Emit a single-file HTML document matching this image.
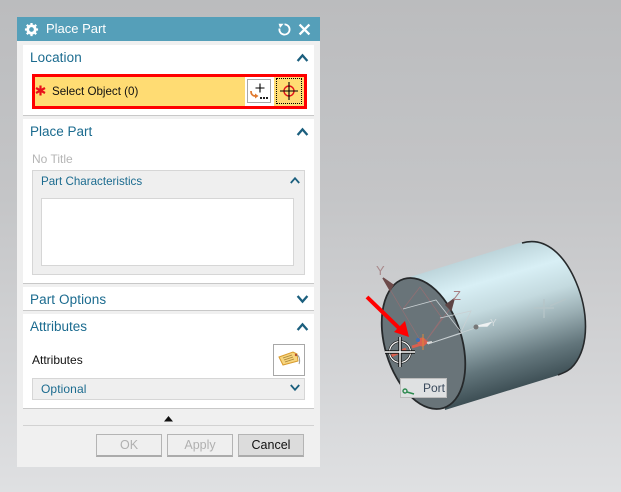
<!DOCTYPE html>
<html>
<head>
<meta charset="utf-8">
<style>
html,body{margin:0;padding:0;}
body{width:621px;height:492px;position:relative;overflow:hidden;background:linear-gradient(180deg,#bbbcbe 0%,#c4c5c7 40%,#d3d4d6 75%,#dfe0e2 100%);font-family:"Liberation Sans",sans-serif;}
.a{position:absolute;box-sizing:border-box;}
.t{position:absolute;white-space:nowrap;line-height:16px;}
.h{font-size:13.5px;color:#1b6b8f;}
.sec{background:#fff;left:23px;width:291px;border-bottom:1px solid #c8c8c8;}
.btn{border:1px solid #b4b4b4;border-bottom:2px solid #ababab;background:#efefef;text-align:center;font-size:12.5px;line-height:21px;color:#b0b0b0;}
svg{position:absolute;overflow:visible;}
</style>
</head>
<body>
<!-- 3D model -->
<svg style="left:0;top:0" width="621" height="492" viewBox="0 0 621 492">
<defs>
<linearGradient id="cy" gradientUnits="userSpaceOnUse" x1="462" y1="254" x2="504" y2="398">
<stop offset="0" stop-color="#b6ced4"/>
<stop offset=".22" stop-color="#d8eff5"/>
<stop offset=".4" stop-color="#c4dadf"/>
<stop offset=".58" stop-color="#9aaeb3"/>
<stop offset=".78" stop-color="#63767c"/>
<stop offset="1" stop-color="#36474d"/>
</linearGradient>
</defs>
<path d="M410 277 L526 241 C546 238 565 256 576 282 C588 310 590 345 574 365 C570 370 566 372 562 374 L445 410 L437 350 Z" fill="url(#cy)"/>
<path d="M522 243 C546 236 565 256 576 282 C588 310 590 345 574 365 C570 370 566 372 558 375" fill="none" stroke="#26292b" stroke-width="1.6"/>
<ellipse cx="423.5" cy="343.5" rx="38.5" ry="67.5" transform="rotate(-17 423.5 343.5)" fill="#697479" stroke="#26292b" stroke-width="1.8"/>
<!-- datum -->
<g fill="none" stroke="#9c6e72" stroke-width=".7" opacity=".85">
<path d="M385 281 L423 345"/><path d="M423 345 L452 306"/>
<path d="M403 309 L420 287 L442 318 L423 345"/>
</g>
<g fill="none" stroke="#c9d0d3" stroke-width=".8">
<path d="M403 309 L436 300 L462 333 L428 344"/>
<path d="M440 318 L471 311 L461 332"/>
<path d="M428 344 L490 323"/>
</g>
<path d="M383 278 L393 285 L390 290 Z" fill="#6d4a4a" stroke="#6d4a4a" stroke-width="1.5"/>
<path d="M454 299 L451 310 L446 305 Z" fill="#5d4545" stroke="#5d4545" stroke-width="1.5"/>
<path d="M478 326 L490 323 L487 326 Z" fill="#eef1f2" stroke="#eef1f2" stroke-width="1.5"/>
<circle cx="476" cy="327" r="2.5" fill="#777"/>
<text x="376" y="275" font-family="Liberation Sans,sans-serif" font-size="13" fill="#a98a8c">Y</text>
<text x="453" y="300" font-family="Liberation Sans,sans-serif" font-size="13" fill="#a87f82">Z</text>
<text x="490" y="326" font-family="Liberation Sans,sans-serif" font-size="10" fill="#d5dcde">Y</text>
<!-- faint csys on body -->
<g stroke="#b6c4c8" fill="none" stroke-width="1.5" opacity=".9"><path d="M544 299v19M534 308h20M550 306l16-7"/></g>
<!-- port marker -->
<path d="M412 347 L428 342" stroke="#d9604f" stroke-width="3"/>
<path d="M391 356 L406 349" stroke="#d9604f" stroke-width="3"/>
<circle cx="422" cy="342" r="4.5" fill="#d9604f"/>
<circle cx="418" cy="340" r="2" fill="#3d6fb5"/>
<path d="M423 334V350" stroke="#d98a3a" stroke-width="1"/>
<path d="M427 343 L432 342" stroke="#d8d8d8" stroke-width="2"/>
<!-- cursor -->
<circle cx="400" cy="352" r="10.5" fill="none" stroke="#111" stroke-width="2.4"/>
<circle cx="400" cy="352" r="10.5" fill="none" stroke="#fff" stroke-width="1.2"/>
<path d="M400 337V367M385 352H415" stroke="#111" stroke-width="3.4"/>
<path d="M400 337V367M385 352H415" stroke="#fff" stroke-width="1.4"/>
<!-- red arrow -->
<path d="M367 297 L400 329" stroke="#f00" stroke-width="4"/>
<path d="M409 337 L394 332 L405 321 Z" fill="#f00"/>
</svg>
<!-- Port tooltip -->
<div class="a" style="left:400px;top:378px;width:47px;height:20px;background:#dfe1e2;border:1px solid #bcbcbc;"></div>
<div class="t" style="left:423px;top:380px;font-size:12px;color:#3a4a5c;">Port</div>
<svg style="left:402px;top:388px" width="14" height="10"><circle cx="3" cy="3" r="2" fill="none" stroke="#2e8b50" stroke-width="1.4"/><path d="M5 4L12 6" stroke="#2e8b50" stroke-width="1.6"/></svg>

<!-- Dialog -->
<div class="a" style="left:17px;top:17px;width:303px;height:450px;background:#f0f0f0;"></div>
<div class="a" style="left:17px;top:17px;width:303px;height:24px;background:#559fb9;"></div>
<svg style="left:24px;top:22px" width="15" height="15" viewBox="0 0 16 16"><circle cx="8" cy="8" r="4" fill="none" stroke="#fff" stroke-width="3"/><path d="M8 1V3.5M8 12.5V15M1 8H3.5M12.5 8H15M3 3L4.8 4.8M11.2 11.2L13 13M3 13L4.8 11.2M11.2 4.8L13 3" stroke="#fff" stroke-width="2.4"/></svg>
<div class="t" style="left:46px;top:21px;font-size:13px;color:#fff;">Place Part</div>
<svg style="left:278px;top:23px" width="13" height="13" viewBox="0 0 13 13"><path d="M6.5 1.4A5.1 5.1 0 1 1 1.5 5.5" fill="none" stroke="#fff" stroke-width="1.8"/><path d="M.6 .8L5.6 .8L2 5Z" fill="#fff"/></svg>
<svg style="left:299px;top:24px" width="11" height="11" viewBox="0 0 11 11"><path d="M.6 .6L10.4 10.4M10.4 .6L.6 10.4" stroke="#fff" stroke-width="2.3"/></svg>

<!-- Location -->
<div class="a sec" style="top:45px;height:71px;"></div>
<div class="t h" style="left:30px;top:50px;letter-spacing:.1px;">Location</div>
<svg style="left:297px;top:54px" width="11" height="8"><path d="M.6 7L5.5 1.4L10.4 7" fill="none" stroke="#1b5f7e" stroke-width="2.3"/></svg>
<div class="a" style="left:32px;top:74px;width:275px;height:35px;background:#ffdc73;border:3px solid #f00;"></div>
<svg style="left:35px;top:85px" width="11" height="11" viewBox="0 0 11 11"><path d="M5.5 .5V10.5M1 3L10 8M10 3L1 8" stroke="#e8101a" stroke-width="2.2"/></svg>
<div class="t" style="left:52px;top:84px;font-size:11.6px;color:#111;">Select Object (0)</div>
<div class="a" style="left:245px;top:77px;width:29px;height:29px;background:#fff;"></div>
<div class="a" style="left:247px;top:79px;width:24px;height:24px;background:#fff;border:1px solid #a8a8a8;"></div>
<svg style="left:249px;top:81px" width="21" height="20" viewBox="0 0 21 20"><path d="M11 2.5V11.5M6.5 7H15.5" stroke="#000" stroke-width="1.1"/><path d="M2 10C2 14 4 15 7 15" fill="none" stroke="#e07a30" stroke-width="1.8"/><path d="M6 12.5L9.5 15L6 17.5Z" fill="#e07a30"/><path d="M11 16h2v2h-2zM14 16h2v2h-2zM17 16h2v2h-2z" fill="#222"/></svg>
<div class="a" style="left:276px;top:78px;width:26px;height:26px;border:1px dotted #000;"></div>
<svg style="left:279px;top:81px" width="20" height="20" viewBox="0 0 20 20"><circle cx="10" cy="10" r="5" fill="none" stroke="#e0141c" stroke-width="1.4"/><path d="M10 1V19M1 10H19" stroke="#000" stroke-width="1.1"/></svg>

<!-- Place Part -->
<div class="a sec" style="top:119px;height:165px;"></div>
<div class="t h" style="left:30px;top:124px;">Place Part</div>
<svg style="left:297px;top:128px" width="11" height="8"><path d="M.6 7L5.5 1.4L10.4 7" fill="none" stroke="#1b5f7e" stroke-width="2.3"/></svg>
<div class="t" style="left:32px;top:151px;font-size:12px;color:#b5b5b5;">No Title</div>
<div class="a" style="left:32px;top:170px;width:273px;height:105px;background:#efefef;border:1px solid #d6d6d6;"></div>
<div class="t" style="left:41px;top:174px;font-size:11.6px;color:#1b6b8f;">Part Characteristics</div>
<svg style="left:290px;top:177px" width="10" height="7"><path d="M.8 6L5 1.2L9.2 6" fill="none" stroke="#1b5f7e" stroke-width="1.8"/></svg>
<div class="a" style="left:41px;top:198px;width:253px;height:68px;background:#fff;border:1px solid #d6d6d6;"></div>

<!-- Part Options -->
<div class="a sec" style="top:287px;height:24px;"></div>
<div class="t h" style="left:30px;top:292px;letter-spacing:.1px;">Part Options</div>
<svg style="left:297px;top:295px" width="11" height="8"><path d="M.6 1L5.5 6.6L10.4 1" fill="none" stroke="#1b5f7e" stroke-width="2.3"/></svg>

<!-- Attributes -->
<div class="a sec" style="top:314px;height:95px;"></div>
<div class="t h" style="left:30px;top:319px;">Attributes</div>
<svg style="left:297px;top:323px" width="11" height="8"><path d="M.6 7L5.5 1.4L10.4 7" fill="none" stroke="#1b5f7e" stroke-width="2.3"/></svg>
<div class="t" style="left:32px;top:352px;font-size:12px;color:#111;">Attributes</div>
<div class="a" style="left:273px;top:344px;width:32px;height:32px;background:#fff;border:1px solid #a8a8a8;"></div>
<svg style="left:278px;top:350px" width="24" height="20" viewBox="0 0 24 20"><path d="M1 7L15 2L19 4L20 11L5 15Z" fill="#f7d57e" stroke="#d89b2e" stroke-width="1"/><path d="M5 8L14 5M6 10L15 7M7 12L16 9" stroke="#a8843a" stroke-width=".8"/><circle cx="18" cy="5" r="1.2" fill="#b5502a"/><path d="M19 5C22 6 22 12 21 14" fill="none" stroke="#999" stroke-width="1"/></svg>
<div class="a" style="left:32px;top:378px;width:273px;height:22px;background:#efefef;border:1px solid #d6d6d6;"></div>
<div class="t" style="left:41px;top:381px;font-size:12px;color:#1b6b8f;letter-spacing:.1px;">Optional</div>
<svg style="left:290px;top:384px" width="10" height="7"><path d="M.8 1L5 5.8L9.2 1" fill="none" stroke="#1b5f7e" stroke-width="1.8"/></svg>

<!-- footer -->
<svg style="left:164px;top:416px" width="9" height="6"><path d="M0 5.5L4.5 0L9 5.5Z" fill="#111"/></svg>
<div class="a" style="left:23px;top:425px;width:291px;height:1px;background:#d2d2d2;"></div>
<div class="a btn" style="left:96px;top:434px;width:66px;height:23px;">OK</div>
<div class="a btn" style="left:167px;top:434px;width:66px;height:23px;">Apply</div>
<div class="a btn" style="left:238px;top:434px;width:66px;height:23px;background:#dcdcdc;color:#111;">Cancel</div>
</body>
</html>
